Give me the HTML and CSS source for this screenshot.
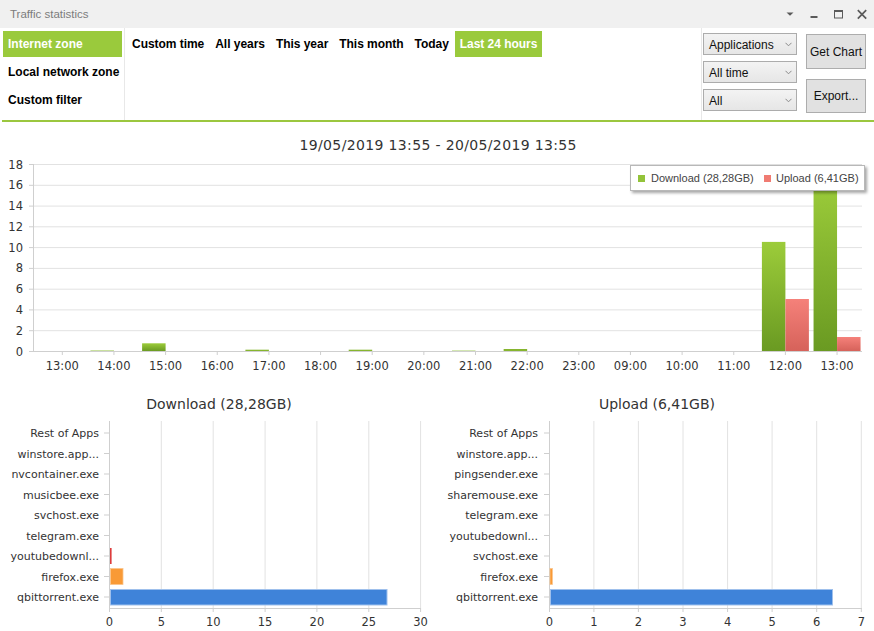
FILE: index.html
```html
<!DOCTYPE html>
<html>
<head>
<meta charset="utf-8">
<title>Traffic statistics</title>
<link rel="stylesheet" href="styles.css">
</head>
<body>
<div class="titlebar">
  <span class="title">Traffic statistics</span>
  <div class="winctl">
    <span class="wbtn"><svg width="12" height="12" viewBox="0 0 12 12"><polygon points="2.5,4.5 9.5,4.5 6,7.8" class="ico-fill"/></svg></span>
    <span class="wbtn"><svg width="12" height="12" viewBox="0 0 12 12"><rect x="2.5" y="8" width="7" height="2" class="ico-fill"/></svg></span>
    <span class="wbtn"><svg width="12" height="12" viewBox="0 0 12 12"><rect x="2.5" y="2.5" width="8" height="7.5" class="ico-stroke"/><rect x="2" y="2" width="9" height="2" class="ico-fill"/></svg></span>
    <span class="wbtn"><svg width="12" height="12" viewBox="0 0 12 12"><path d="M1.8 2.2 L10.2 10.6 M10.2 2.2 L1.8 10.6" class="ico-x"/></svg></span>
  </div>
</div>

<div class="toolbar">
  <div class="zones">
    <div class="zone active">Internet zone</div>
    <div class="zone">Local network zone</div>
    <div class="zone">Custom filter</div>
  </div>
  <div class="periods">
    <div class="period">Custom time</div>
    <div class="period">All years</div>
    <div class="period">This year</div>
    <div class="period">This month</div>
    <div class="period">Today</div>
    <div class="period active">Last 24 hours</div>
  </div>
  <div class="filters">
    <div class="select"><span>Applications</span><svg width="7" height="5" viewBox="0 0 7 5"><polyline points="0.5,0.8 3.5,3.8 6.5,0.8" class="chev"/></svg></div>
    <div class="select"><span>All time</span><svg width="7" height="5" viewBox="0 0 7 5"><polyline points="0.5,0.8 3.5,3.8 6.5,0.8" class="chev"/></svg></div>
    <div class="select"><span>All</span><svg width="7" height="5" viewBox="0 0 7 5"><polyline points="0.5,0.8 3.5,3.8 6.5,0.8" class="chev"/></svg></div>
  </div>
  <div class="actions">
    <button class="btn btn-tall">Get Chart</button>
    <button class="btn">Export...</button>
  </div>
</div>

<svg class="timeline" width="874" height="258" viewBox="0 122 874 258">
  <defs>
    <linearGradient id="gDl" x1="0" y1="0" x2="0" y2="1">
      <stop offset="0" stop-color="#9ccc3a"/>
      <stop offset="1" stop-color="#6a9a22"/>
    </linearGradient>
    <linearGradient id="gUl" x1="0" y1="0" x2="0" y2="1">
      <stop offset="0" stop-color="#f5817a"/>
      <stop offset="1" stop-color="#d6625a"/>
    </linearGradient>
    <filter id="sh" x="-10%" y="-40%" width="125%" height="200%">
      <feDropShadow dx="2" dy="2" stdDeviation="1.5" flood-color="#000" flood-opacity="0.35"/>
    </filter>
  </defs>
  <text class="ctitle" x="438" y="150" text-anchor="middle" textLength="277" lengthAdjust="spacing">19/05/2019 13:55 - 20/05/2019 13:55</text>

  <g class="grid">
    <line x1="34" y1="164.5" x2="862" y2="164.5"/>
    <line x1="34" y1="185.3" x2="862" y2="185.3"/>
    <line x1="34" y1="206.1" x2="862" y2="206.1"/>
    <line x1="34" y1="226.8" x2="862" y2="226.8"/>
    <line x1="34" y1="247.6" x2="862" y2="247.6"/>
    <line x1="34" y1="268.4" x2="862" y2="268.4"/>
    <line x1="34" y1="289.2" x2="862" y2="289.2"/>
    <line x1="34" y1="309.9" x2="862" y2="309.9"/>
    <line x1="34" y1="330.7" x2="862" y2="330.7"/>
  </g>
  <g class="axis">
    <line x1="33.5" y1="164" x2="33.5" y2="351"/>
    <line x1="33" y1="351.5" x2="862" y2="351.5"/>
    <line x1="29" y1="164.5" x2="34" y2="164.5"/>
    <line x1="29" y1="185.3" x2="34" y2="185.3"/>
    <line x1="29" y1="206.1" x2="34" y2="206.1"/>
    <line x1="29" y1="226.8" x2="34" y2="226.8"/>
    <line x1="29" y1="247.6" x2="34" y2="247.6"/>
    <line x1="29" y1="268.4" x2="34" y2="268.4"/>
    <line x1="29" y1="289.2" x2="34" y2="289.2"/>
    <line x1="29" y1="309.9" x2="34" y2="309.9"/>
    <line x1="29" y1="330.7" x2="34" y2="330.7"/>
    <line x1="29" y1="351.5" x2="34" y2="351.5"/>
    <line x1="62.3" y1="351" x2="62.3" y2="355"/>
    <line x1="113.95" y1="351" x2="113.95" y2="355"/>
    <line x1="165.6" y1="351" x2="165.6" y2="355"/>
    <line x1="217.25" y1="351" x2="217.25" y2="355"/>
    <line x1="268.9" y1="351" x2="268.9" y2="355"/>
    <line x1="320.55" y1="351" x2="320.55" y2="355"/>
    <line x1="372.2" y1="351" x2="372.2" y2="355"/>
    <line x1="423.85" y1="351" x2="423.85" y2="355"/>
    <line x1="475.5" y1="351" x2="475.5" y2="355"/>
    <line x1="527.15" y1="351" x2="527.15" y2="355"/>
    <line x1="578.8" y1="351" x2="578.8" y2="355"/>
    <line x1="630.45" y1="351" x2="630.45" y2="355"/>
    <line x1="682.1" y1="351" x2="682.1" y2="355"/>
    <line x1="733.75" y1="351" x2="733.75" y2="355"/>
    <line x1="785.4" y1="351" x2="785.4" y2="355"/>
    <line x1="837.05" y1="351" x2="837.05" y2="355"/>
  </g>
  <g class="lbl" text-anchor="end">
    <text x="23" y="168.5">18</text>
    <text x="23" y="189.3">16</text>
    <text x="23" y="210.1">14</text>
    <text x="23" y="230.8">12</text>
    <text x="23" y="251.6">10</text>
    <text x="23" y="272.4">8</text>
    <text x="23" y="293.2">6</text>
    <text x="23" y="313.9">4</text>
    <text x="23" y="334.7">2</text>
    <text x="23" y="355.5">0</text>
  </g>
  <g class="lbl tlbl" text-anchor="middle">
    <text x="62.3" y="370">13:00</text>
    <text x="113.95" y="370">14:00</text>
    <text x="165.6" y="370">15:00</text>
    <text x="217.25" y="370">16:00</text>
    <text x="268.9" y="370">17:00</text>
    <text x="320.55" y="370">18:00</text>
    <text x="372.2" y="370">19:00</text>
    <text x="423.85" y="370">20:00</text>
    <text x="475.5" y="370">21:00</text>
    <text x="527.15" y="370">22:00</text>
    <text x="578.8" y="370">23:00</text>
    <text x="630.45" y="370">09:00</text>
    <text x="682.1" y="370">10:00</text>
    <text x="733.75" y="370">11:00</text>
    <text x="785.4" y="370">12:00</text>
    <text x="837.05" y="370">13:00</text>
  </g>
  <g>
    <rect x="90.45" y="350" width="23.5" height="1" class="bar-faint"/>
    <rect x="142.1" y="343.3" width="23.5" height="7.7" fill="url(#gDl)"/>
    <rect x="245.4" y="349.7" width="23.5" height="1.3" class="bar-dl"/>
    <rect x="348.7" y="349.7" width="23.5" height="1.3" class="bar-dl"/>
    <rect x="452" y="350.2" width="23.5" height="0.8" class="bar-faint"/>
    <rect x="503.65" y="349" width="23.5" height="2" class="bar-dl"/>
    <rect x="761.9" y="241.9" width="23.5" height="109.1" fill="url(#gDl)"/>
    <rect x="785.4" y="299" width="23.5" height="52" fill="url(#gUl)"/>
    <rect x="813.55" y="179.6" width="23.5" height="171.4" fill="url(#gDl)"/>
    <rect x="837.05" y="337" width="23.5" height="14" fill="url(#gUl)"/>
  </g>
  <g class="legend">
    <rect x="630.5" y="165.5" width="234" height="25" class="legend-box" filter="url(#sh)"/>
    <rect x="638" y="175" width="7" height="7" class="sw-dl"/>
    <text x="651" y="182" class="legend-text">Download (28,28GB)</text>
    <rect x="764" y="175" width="7" height="7" class="sw-ul"/>
    <text x="776" y="182" class="legend-text">Upload (6,41GB)</text>
  </g>
</svg>

<div class="bottom">
  <svg class="hchart" width="437" height="251" viewBox="0 380 437 251">
    <text class="ctitle" x="219" y="409" text-anchor="middle">Download (28,28GB)</text>
    <g class="grid">
      <line x1="161.3" y1="421" x2="161.3" y2="608"/>
      <line x1="213.2" y1="421" x2="213.2" y2="608"/>
      <line x1="265.1" y1="421" x2="265.1" y2="608"/>
      <line x1="316.9" y1="421" x2="316.9" y2="608"/>
      <line x1="368.8" y1="421" x2="368.8" y2="608"/>
      <line x1="420.6" y1="421" x2="420.6" y2="608"/>
    </g>
    <g class="axis">
      <line x1="109.5" y1="421" x2="109.5" y2="608.5"/>
      <line x1="109" y1="608.5" x2="421" y2="608.5"/>
      <line x1="104" y1="433" x2="109" y2="433"/>
      <line x1="104" y1="453.5" x2="109" y2="453.5"/>
      <line x1="104" y1="474" x2="109" y2="474"/>
      <line x1="104" y1="494.5" x2="109" y2="494.5"/>
      <line x1="104" y1="515" x2="109" y2="515"/>
      <line x1="104" y1="535.5" x2="109" y2="535.5"/>
      <line x1="104" y1="556" x2="109" y2="556"/>
      <line x1="104" y1="576.5" x2="109" y2="576.5"/>
      <line x1="104" y1="597" x2="109" y2="597"/>
      <line x1="109.5" y1="608" x2="109.5" y2="612"/>
      <line x1="161.3" y1="608" x2="161.3" y2="612"/>
      <line x1="213.2" y1="608" x2="213.2" y2="612"/>
      <line x1="265.1" y1="608" x2="265.1" y2="612"/>
      <line x1="316.9" y1="608" x2="316.9" y2="612"/>
      <line x1="368.8" y1="608" x2="368.8" y2="612"/>
      <line x1="420.6" y1="608" x2="420.6" y2="612"/>
    </g>
    <g class="lbl applbl" text-anchor="end">
      <text x="99" y="437">Rest of Apps</text>
      <text x="99" y="457.5">winstore.app...</text>
      <text x="99" y="478">nvcontainer.exe</text>
      <text x="99" y="498.5">musicbee.exe</text>
      <text x="99" y="519">svchost.exe</text>
      <text x="99" y="539.5">telegram.exe</text>
      <text x="99" y="560">youtubedownl...</text>
      <text x="99" y="580.5">firefox.exe</text>
      <text x="99" y="601">qbittorrent.exe</text>
    </g>
    <g class="lbl tlbl" text-anchor="middle">
      <text x="109.5" y="626">0</text>
      <text x="161.3" y="626">5</text>
      <text x="213.2" y="626">10</text>
      <text x="265.1" y="626">15</text>
      <text x="316.9" y="626">20</text>
      <text x="368.8" y="626">25</text>
      <text x="420.6" y="626">30</text>
    </g>
    <rect x="110" y="548" width="1.6" height="16" class="bar-red"/>
    <rect x="110.5" y="568.5" width="12.5" height="16" class="bar-orange"/>
    <rect x="110.5" y="589.5" width="276.5" height="15.5" class="bar-blue"/>
  </svg>
  <svg class="hchart" width="437" height="251" viewBox="437 380 437 251">
    <text class="ctitle" x="657" y="409" text-anchor="middle">Upload (6,41GB)</text>
    <g class="grid">
      <line x1="593.9" y1="421" x2="593.9" y2="608"/>
      <line x1="638.4" y1="421" x2="638.4" y2="608"/>
      <line x1="683" y1="421" x2="683" y2="608"/>
      <line x1="727.6" y1="421" x2="727.6" y2="608"/>
      <line x1="772.1" y1="421" x2="772.1" y2="608"/>
      <line x1="816.7" y1="421" x2="816.7" y2="608"/>
      <line x1="861.3" y1="421" x2="861.3" y2="608"/>
    </g>
    <g class="axis">
      <line x1="549.5" y1="421" x2="549.5" y2="608.5"/>
      <line x1="549" y1="608.5" x2="862" y2="608.5"/>
      <line x1="544" y1="433" x2="549" y2="433"/>
      <line x1="544" y1="453.5" x2="549" y2="453.5"/>
      <line x1="544" y1="474" x2="549" y2="474"/>
      <line x1="544" y1="494.5" x2="549" y2="494.5"/>
      <line x1="544" y1="515" x2="549" y2="515"/>
      <line x1="544" y1="535.5" x2="549" y2="535.5"/>
      <line x1="544" y1="556" x2="549" y2="556"/>
      <line x1="544" y1="576.5" x2="549" y2="576.5"/>
      <line x1="544" y1="597" x2="549" y2="597"/>
      <line x1="549.5" y1="608" x2="549.5" y2="612"/>
      <line x1="593.9" y1="608" x2="593.9" y2="612"/>
      <line x1="638.4" y1="608" x2="638.4" y2="612"/>
      <line x1="683" y1="608" x2="683" y2="612"/>
      <line x1="727.6" y1="608" x2="727.6" y2="612"/>
      <line x1="772.1" y1="608" x2="772.1" y2="612"/>
      <line x1="816.7" y1="608" x2="816.7" y2="612"/>
      <line x1="861.3" y1="608" x2="861.3" y2="612"/>
    </g>
    <g class="lbl applbl" text-anchor="end">
      <text x="538" y="437">Rest of Apps</text>
      <text x="538" y="457.5">winstore.app...</text>
      <text x="538" y="478">pingsender.exe</text>
      <text x="538" y="498.5">sharemouse.exe</text>
      <text x="538" y="519">telegram.exe</text>
      <text x="538" y="539.5">youtubedownl...</text>
      <text x="538" y="560">svchost.exe</text>
      <text x="538" y="580.5">firefox.exe</text>
      <text x="538" y="601">qbittorrent.exe</text>
    </g>
    <g class="lbl tlbl" text-anchor="middle">
      <text x="549.5" y="626">0</text>
      <text x="593.9" y="626">1</text>
      <text x="638.4" y="626">2</text>
      <text x="683" y="626">3</text>
      <text x="727.6" y="626">4</text>
      <text x="772.1" y="626">5</text>
      <text x="816.7" y="626">6</text>
      <text x="861.3" y="626">7</text>
    </g>
    <rect x="550" y="568.5" width="2.4" height="16" class="bar-orange"/>
    <rect x="550.5" y="589.5" width="282" height="15.5" class="bar-blue"/>
  </svg>
</div>
</body>
</html>
```

FILE: styles.css
```css
* { box-sizing: border-box; }
html, body { margin: 0; padding: 0; }
body {
  width: 874px;
  height: 631px;
  overflow: hidden;
  background: #ffffff;
  font-family: "Liberation Sans", Arial, sans-serif;
  font-size: 12px;
  color: #000;
}

/* title bar */
.titlebar {
  height: 28px;
  background: #f0f0f0;
  display: flex;
  align-items: center;
  justify-content: space-between;
  padding-left: 10px;
}
.title { color: #7c7c7c; font-size: 11.5px; }
.winctl { display: flex; align-items: center; }
.wbtn { width: 24px; height: 28px; display: flex; align-items: center; justify-content: center; }
.wbtn svg { display: block; }
.ico-fill { fill: #5a5a5a; }
.ico-stroke { fill: none; stroke: #5a5a5a; stroke-width: 1; }
.ico-x { fill: none; stroke: #5a5a5a; stroke-width: 1.7; }

/* toolbar */
.toolbar {
  height: 94px;
  margin-left: 2px;
  border-bottom: 2px solid #9bc73f;
  display: flex;
}
.zones {
  width: 123px;
  border-right: 1px solid #e8e8e8;
  padding: 3px 2px 0 1px;
  display: flex;
  flex-direction: column;
  gap: 2px;
}
.zone {
  height: 26px;
  line-height: 27px;
  padding-left: 5px;
  font-weight: bold;
  white-space: nowrap;
}
.zone.active, .period.active { background: #9aca3c; color: #fff; }
.periods {
  flex: 1;
  display: flex;
  align-items: flex-start;
  padding: 3px 0 0 2px;
  gap: 1px;
}
.period {
  height: 26px;
  line-height: 27px;
  padding: 0 5px;
  font-weight: bold;
  letter-spacing: -0.04px;
  white-space: nowrap;
}
.filters {
  width: 96px;
  border-left: 1px solid #e8e8e8;
  padding: 5px 0 0 1px;
  display: flex;
  flex-direction: column;
  gap: 6px;
}
.select {
  width: 94px;
  height: 22px;
  border: 1px solid #acacac;
  background: linear-gradient(#f3f3f3, #e6e6e6);
  display: flex;
  align-items: center;
  justify-content: space-between;
  padding: 1px 4px 0 5px;
  color: #111;
}
.select svg { display: block; }
.chev { fill: none; stroke: #8a8a8a; stroke-width: 1; }
.actions {
  width: 77px;
  padding: 6px 8px 0 9px;
  display: flex;
  flex-direction: column;
  gap: 10px;
}
.btn {
  width: 60px;
  height: 34px;
  background: #e1e1e1;
  border: 1px solid #adadad;
  font-family: "Liberation Sans", Arial, sans-serif;
  font-size: 12px;
  color: #111;
  padding: 0;
  margin: 0;
}
.btn-tall { height: 35px; }

/* charts */
.timeline, .hchart { display: block; }
.bottom { display: flex; height: 251px; }
.ctitle { font-family: "DejaVu Sans", Verdana, sans-serif; font-size: 14px; fill: #333; }
.lbl text, .lbl { font-family: "DejaVu Sans", Verdana, sans-serif; font-size: 11.5px; fill: #333; }
.applbl text, .applbl { font-size: 11px; }
.grid line { stroke: #e2e2e2; stroke-width: 1; }
.axis line { stroke: #cfcfcf; stroke-width: 1; }
.bar-dl { fill: #86b52f; }
.bar-faint { fill: #c9e09f; }
.legend-box { fill: #fff; stroke: #b8b8b8; stroke-width: 1; }
.legend-text { font-family: "Liberation Sans", Arial, sans-serif; font-size: 11px; fill: #444; }
.sw-dl { fill: #93c33a; }
.sw-ul { fill: #f07b72; }
.bar-blue { fill: #3f83d9; stroke: #9fc0ec; stroke-width: 1; }
.bar-orange { fill: #f99a36; stroke: #fbc58c; stroke-width: 0.8; }
.bar-red { fill: #dd3c3c; }
```
